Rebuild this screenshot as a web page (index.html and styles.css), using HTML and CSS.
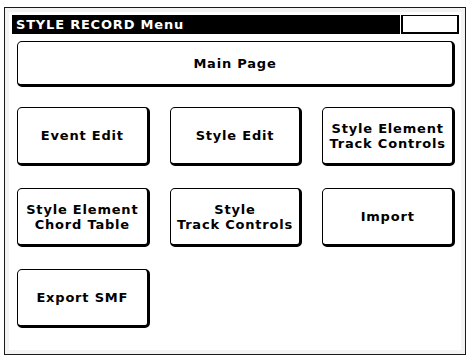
FILE: index.html
```html
<!DOCTYPE html>
<html>
<head>
<meta charset="utf-8">
<link rel="stylesheet" href="styles.css">
</head>
<body>
<div class="frame">
  <div class="titlerow">
    <div class="title">STYLE RECORD Menu</div>
    <div class="titlebox"></div>
  </div>
  <div class="content">
    <div class="btn main">Main Page</div>
    <div class="grid">
      <div class="btn">Event Edit</div>
      <div class="btn">Style Edit</div>
      <div class="btn">Style Element<br>Track Controls</div>
      <div class="btn">Style Element<br>Chord Table</div>
      <div class="btn">Style<br>Track Controls</div>
      <div class="btn">Import</div>
      <div class="btn">Export SMF</div>
    </div>
  </div>
</div>
</body>
</html>
```

FILE: styles.css
```css
html, body {
  margin: 0;
  padding: 0;
  background: #ffffff;
}
body {
  width: 468px;
  height: 357px;
  overflow: hidden;
  font-family: "DejaVu Sans", "Liberation Sans", sans-serif;
  font-weight: bold;
  color: #000;
}
.frame {
  box-sizing: border-box;
  margin: 7px 0 0 4px;
  width: 462px;
  height: 348px;
  border: 1px solid #1a1a1a;
  background: #ffffff;
  box-shadow: inset 0 0 0 4px #f3f3f3;
  padding: 7px 6px 0 7px;
}
.titlerow {
  display: flex;
  height: 19px;
}
.title {
  flex: 1;
  background: #000;
  color: #fff;
  font-size: 13px;
  letter-spacing: 0.8px;
  line-height: 19px;
  padding-left: 4px;
}
.titlebox {
  box-sizing: border-box;
  width: 58px;
  margin-left: 1px;
  border: 2px solid #000;
  border-top-width: 1px;
  background: #fff;
}
.content {
  padding: 7px 4px 0 5px;
}
.btn {
  box-sizing: border-box;
  border: 1px solid #000;
  border-right-width: 3px;
  border-bottom-width: 3px;
  border-radius: 5px;
  background: #fff;
  display: flex;
  align-items: center;
  justify-content: center;
  text-align: center;
  font-size: 13px;
  line-height: 15px;
  letter-spacing: 0.8px;
}
.main {
  height: 46px;
}
.grid {
  margin-top: 20px;
  display: grid;
  grid-template-columns: 1fr 1fr 1fr;
  grid-auto-rows: 59px;
  column-gap: 20px;
  row-gap: 22px;
}
```
